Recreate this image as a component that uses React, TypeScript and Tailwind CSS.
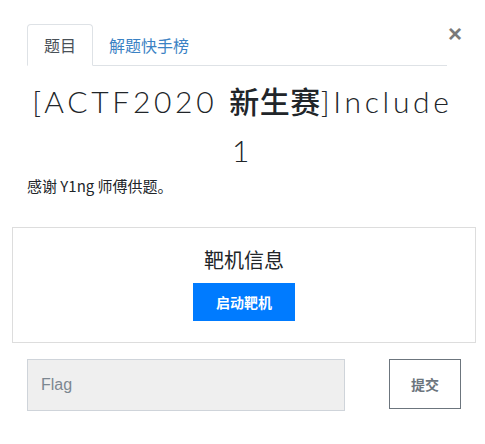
import React from "react";

export default function App() {
  return (
    <div className="w-[485px] h-[444px] bg-white font-['Liberation_Sans','Noto_Sans_CJK_SC',sans-serif]">
      {/* tabs */}
      <div className="flex pt-[24px] pl-[27px]">
        <div className="flex w-[420px] border-b border-[#dee2e6]">
          <div className="-mb-px border border-[#dee2e6] border-b-white rounded-t-[4px] px-[16px] h-[42px] flex items-center text-[16px] text-[#495057] font-['Noto_Sans_CJK_SC',sans-serif]">
            题目
          </div>
          <div className="px-[16px] h-[41px] flex items-center text-[16px] text-[#3a82c4] font-['Noto_Sans_CJK_SC',sans-serif]">
            解题快手榜
          </div>
        </div>
        <div className="ml-[1px] -mt-[2px] text-[24px] font-bold text-[#7a7a7a] leading-none h-[24px] font-['Liberation_Sans',sans-serif]">
          ×
        </div>
      </div>

      {/* title */}
      <h3 className="mt-[10px] px-[24px] text-center text-[30px] leading-[49px] font-light text-[#212529] tracking-[3.7px] font-['Lato','Noto_Sans_CJK_SC',sans-serif]">
        [ACTF2020{" "}
        <span className="font-medium tracking-[0.5px] font-['Noto_Sans_CJK_SC',sans-serif]">新生赛</span>
        ]Include 1
      </h3>

      <p className="pl-[27px] text-[15px] leading-[21px] text-[#212529] font-['Noto_Sans_CJK_SC',sans-serif]">
        感谢 Y1ng 师傅供题。
      </p>

      {/* box */}
      <div className="mt-[31px] ml-[12px] w-[464px] h-[116px] border border-[#dddddd] flex flex-col items-center">
        <div className="mt-[18px] text-[20px] leading-[28px] text-[#212529] font-['Noto_Sans_CJK_SC',sans-serif]">
          靶机信息
        </div>
        <button className="mt-[9px] w-[102px] h-[38px] bg-[#007bff] text-white text-[14px] font-bold font-['Noto_Sans_CJK_SC',sans-serif]">
          启动靶机
        </button>
      </div>

      {/* flag form */}
      <div className="flex mt-[16px] pl-[27px]">
        <input
          className="w-[318px] h-[52px] bg-[#efefef] border border-[#cfd4da] px-[13px] text-[16px] text-[#495057] placeholder:text-[#7c8791] outline-none font-['Liberation_Sans',sans-serif]"
          placeholder="Flag"
        />
        <button className="ml-[44px] w-[72px] h-[50px] border border-[#6c757d] bg-white text-[#6c757d] text-[14px] font-bold font-['Noto_Sans_CJK_SC',sans-serif]">
          提交
        </button>
      </div>
    </div>
  );
}
